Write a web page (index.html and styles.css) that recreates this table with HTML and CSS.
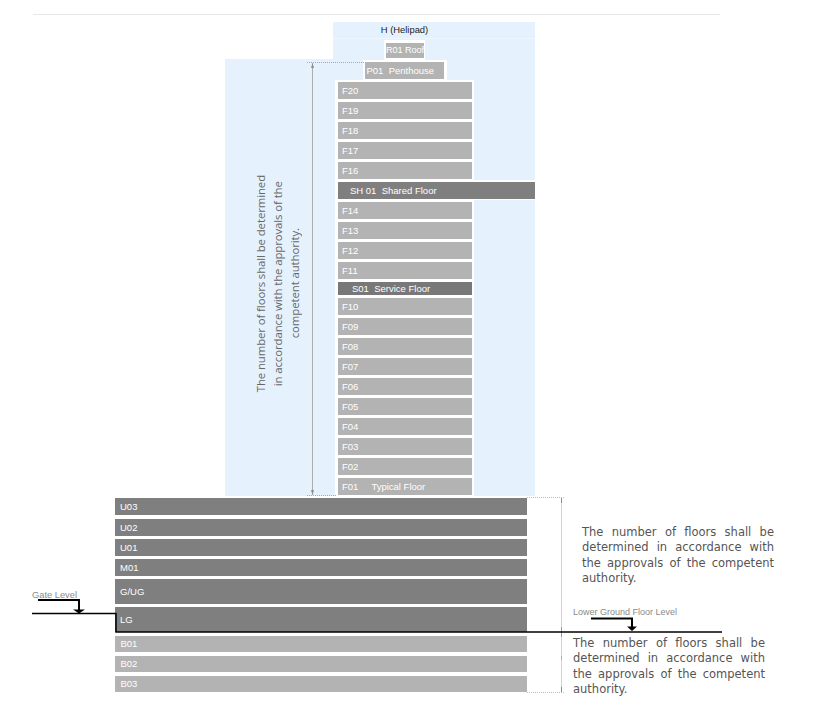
FILE: index.html
```html
<!DOCTYPE html>
<html>
<head>
<meta charset="utf-8">
<title>Building floors</title>
<link rel="stylesheet" href="styles.css">
</head>
<body>
<div class="rule"></div>
<div class="upper">
  <div class="side">
    <p class="vnote">The number of floors shall be determined<br>in accordance with the approvals of the<br>competent authority.</p>
  </div>
  <div class="tower">
    <div class="heli"><span>H (Helipad)</span></div>
    <div class="lvl roof">R01 Roof</div>
    <div class="lvl pent">P01  Penthouse</div>
    <div class="lvl fl">F20</div>
    <div class="lvl fl">F19</div>
    <div class="lvl fl">F18</div>
    <div class="lvl fl">F17</div>
    <div class="lvl fl">F16</div>
    <div class="lvl fl shared">SH 01  Shared Floor</div>
    <div class="lvl fl">F14</div>
    <div class="lvl fl">F13</div>
    <div class="lvl fl">F12</div>
    <div class="lvl fl">F11</div>
    <div class="lvl fl service">S01  Service Floor</div>
    <div class="lvl fl">F10</div>
    <div class="lvl fl">F09</div>
    <div class="lvl fl">F08</div>
    <div class="lvl fl">F07</div>
    <div class="lvl fl">F06</div>
    <div class="lvl fl">F05</div>
    <div class="lvl fl">F04</div>
    <div class="lvl fl">F03</div>
    <div class="lvl fl">F02</div>
    <div class="lvl fl">F01     Typical Floor</div>
  </div>
</div>
<div class="lower">
  <div class="gate-col"><div class="gate-label">Gate Level</div></div>
  <div class="podium">
    <div class="pr first">U03</div>
    <div class="pr second">U02</div>
    <div class="pr">U01</div>
    <div class="pr">M01</div>
    <div class="pr tall">G/UG</div>
    <div class="pr tall">LG</div>
    <div class="pr base">B01</div>
    <div class="pr base">B02</div>
    <div class="pr base">B03</div>
  </div>
  <div class="notes">
    <p class="note note-up"><span>The number of floors shall be</span><span>determined in accordance with</span><span>the approvals of the competent</span><span class="last">authority.</span></p>
    <div class="lgf-label">Lower Ground Floor Level</div>
    <p class="note note-down"><span>The number of floors shall be</span><span>determined in accordance with</span><span>the approvals of the competent</span><span class="last">authority.</span></p>
  </div>
</div>
<svg class="overlay" width="816" height="705" viewBox="0 0 816 705">
  <line x1="307" y1="62.5" x2="365" y2="62.5" stroke="#a8a8a8" stroke-dasharray="1 1"/>
  <line x1="307" y1="495.5" x2="337" y2="495.5" stroke="#a8a8a8" stroke-dasharray="1 1"/>
  <line x1="312.5" y1="63" x2="312.5" y2="495" stroke="#acacac"/>
  <path d="M312.5 63 l-1.5 5 h3z" fill="#8a8a8a"/>
  <path d="M312.5 495 l-1.5 -5 h3z" fill="#8a8a8a"/>
  <line x1="527" y1="497.5" x2="565" y2="497.5" stroke="#bdbdbd" stroke-dasharray="1 1"/>
  <line x1="527" y1="692.5" x2="564" y2="692.5" stroke="#bdbdbd" stroke-dasharray="1 1"/>
  <line x1="561.5" y1="498" x2="561.5" y2="692" stroke="#d2d2d2"/>
  <line x1="561.5" y1="498" x2="561.5" y2="503" stroke="#8a8a8a"/>
  <line x1="561.5" y1="627" x2="561.5" y2="637" stroke="#9a9a9a"/>
  <line x1="561.5" y1="656" x2="561.5" y2="660" stroke="#b0b0b0"/>
  <line x1="561.5" y1="687" x2="561.5" y2="692" stroke="#8a8a8a"/>
  <polyline points="32,613.5 116,613.5 116,632 722,632" fill="none" stroke="#000" stroke-width="1.5"/>
  <path d="M38 600 H79 V610" fill="none" stroke="#000" stroke-width="2"/>
  <polygon points="73,609.5 85,609.5 79,613.5" fill="#000"/>
  <path d="M591 618.5 H632 V627" fill="none" stroke="#000" stroke-width="2"/>
  <polygon points="627,626.5 637,626.5 632,631" fill="#000"/>
</svg>
</body>
</html>
```

FILE: styles.css
```css
* { box-sizing: border-box; margin: 0; padding: 0; }
html, body { background: #fff; }
body {
  width: 816px;
  height: 705px;
  overflow: hidden;
  position: relative;
  font-family: "Liberation Sans", Arial, sans-serif;
}
.rule {
  margin: 14px 0 0 33px;
  width: 687px;
  height: 1px;
  background: #e8e8e8;
}
.upper {
  display: flex;
  align-items: stretch;
  margin: 7px 0 0 225px;
}
.side {
  width: 108px;
  margin-top: 37px;
  background: #e5f2fd;
  display: flex;
  align-items: center;
  justify-content: center;
  padding-top: 13px;
  padding-right: 3px;
}
.vnote {
  writing-mode: vertical-rl;
  transform: rotate(180deg);
  font-family: "Open Sans", sans-serif;
  font-size: 11.4px;
  letter-spacing: -0.1px;
  line-height: 17px;
  color: #666;
  text-align: center;
  white-space: nowrap;
}
.tower {
  width: 202px;
  background: #e5f2fd;
  display: flex;
  flex-direction: column;
  align-items: flex-start;
}
.heli {
  width: 100%;
  height: 17px;
  border-bottom: 1px solid #eef6fe;
  display: flex;
  padding-left: 51px;
}
.heli span {
  width: 41px;
  display: flex;
  justify-content: center;
  white-space: nowrap;
  font-size: 9.4px;
  line-height: 16px;
  color: #222;
}
.lvl {
  background: #b3b3b3;
  border: solid #fff;
  color: #fff;
  font-size: 9.5px;
  white-space: pre;
  overflow: hidden;
}
.roof {
  margin: 1px 0 0 51px;
  width: 41px;
  height: 20px;
  border-width: 3px 1px 2px 2px;
  line-height: 15px;
  font-size: 9.2px;
  letter-spacing: -0.1px;
}
.pent {
  margin-left: 30px;
  width: 84px;
  height: 20px;
  border-width: 2px 3px 1px 2px;
  line-height: 17px;
  padding-left: 1.5px;
}
.fl {
  margin-left: 2px;
  width: 139px;
  height: 20px;
  border-width: 2px 2px 1px 3px;
  line-height: 17px;
  padding-left: 4px;
}
.fl.shared {
  width: 200px;
  border-right-width: 0;
  background: #7f7f7f;
  padding-left: 12px;
}
.fl.service {
  height: 16px;
  line-height: 13px;
  background: #787878;
  padding-left: 14px;
}
.lower {
  display: flex;
  align-items: flex-start;
}
.gate-col { width: 115px; }
.gate-label {
  margin: 94px 0 0 32px;
  font-size: 9.3px;
  line-height: 11px;
  color: #8a8a8a;
  white-space: nowrap;
}
.podium {
  width: 412px;
  display: flex;
  flex-direction: column;
}
.pr {
  height: 17px;
  margin-top: 3px;
  background: #7f7f7f;
  color: #fff;
  font-size: 9.5px;
  line-height: 17px;
  padding-left: 5px;
}
.pr.first { margin-top: 2px; }
.pr.second { margin-top: 4px; }
.pr.tall { height: 25px; line-height: 25px; }
.pr.base {
  background: #b3b3b3;
  height: 16px;
  line-height: 16px;
  margin-top: 4px;
  padding-left: 5.5px;
}
.notes {
  flex: 1;
  display: flex;
  flex-direction: column;
  align-items: flex-start;
}
.note {
  width: 192px;
  font-family: "DejaVu Sans", Verdana, sans-serif;
  font-size: 11.5px;
  line-height: 15.3px;
  color: #555;
}
.note span {
  display: block;
  text-align: justify;
  text-align-last: justify;
}
.note span.last { text-align-last: left; }
.note-up { margin: 29px 0 0 55px; }
.lgf-label {
  margin: 21px 0 0 46px;
  font-size: 9px;
  line-height: 11px;
  color: #8a8a8a;
  white-space: nowrap;
}
.note-down { margin: 18px 0 0 46px; }
.overlay {
  position: absolute;
  top: 0;
  left: 0;
  pointer-events: none;
}
```
